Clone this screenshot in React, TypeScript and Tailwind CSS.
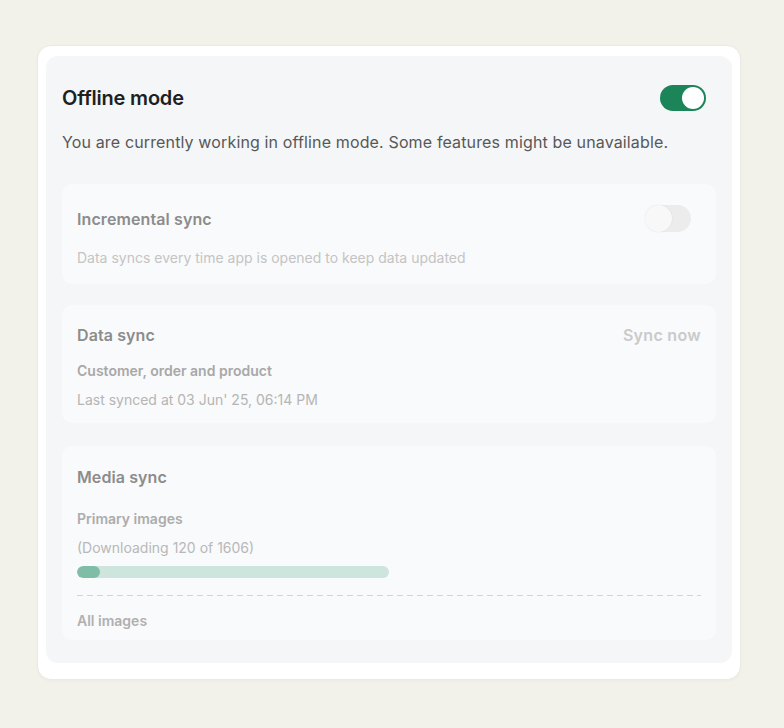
import React from "react";

function Toggle({ on }: { on: boolean }) {
  if (on) {
    return (
      <div className="w-[46px] h-[26px] rounded-full bg-[#1b8459] flex items-center justify-end px-[2px] shrink-0">
        <div className="w-[22px] h-[22px] rounded-full bg-white" />
      </div>
    );
  }
  return (
    <div className="w-[46px] h-[27px] rounded-full bg-[#ececec] flex items-center justify-start shrink-0">
      <div className="w-[27px] h-[27px] rounded-full bg-[#f8f8f8] shadow-[0_0_2px_rgba(0,0,0,0.08)]" />
    </div>
  );
}

export default function App() {
  const done = 120;
  const total = 1606;
  const pct = Math.max((done / total) * 100, 6.8);
  return (
    <div
      className="min-h-[728px] w-full bg-[#f2f2ea] pt-[45px] pl-[37px]"
      style={{ fontFamily: "Inter, 'Noto Sans', sans-serif" }}
    >
      <div className="w-[704px] h-[635px] bg-white rounded-[14px] border border-[#ebebe3] pt-[10px] px-[8px] pb-[16px] shadow-[0_1px_3px_rgba(0,0,0,0.03)]">
        <div className="h-full bg-[#f4f6f7] rounded-[12px] px-[16px] pt-[29px] pb-[20px] flex flex-col">
          <div className="flex items-center justify-between pr-[10px]">
            <div className="text-[20px] leading-[26px] font-semibold text-[#1f1f1f] tracking-[-0.2px]">
              Offline mode
            </div>
            <Toggle on={true} />
          </div>
          <div className="mt-[19px] text-[16px] leading-[24px] text-[#585858] tracking-[0.14px]">
            You are currently working in offline mode. Some features might be unavailable.
          </div>

          <div className="mt-[30px] bg-[#f9fafb] rounded-[10px] px-[15px] pt-[21px] pb-[16px]">
            <div className="flex items-center justify-between pr-[10px]">
              <div className="text-[16px] leading-[24px] font-semibold text-[#8c8c8c] tracking-[0.1px]">
                Incremental sync
              </div>
              <Toggle on={false} />
            </div>
            <div className="mt-[16px] text-[14px] leading-[20px] text-[#c4c4c4]">
              Data syncs every time app is opened to keep data updated
            </div>
          </div>

          <div className="mt-[21px] bg-[#f9fafb] rounded-[10px] px-[15px] pt-[18px] pb-[13px]">
            <div className="flex items-center justify-between">
              <div className="text-[16px] leading-[24px] font-semibold text-[#8c8c8c] tracking-[0.1px]">
                Data sync
              </div>
              <div className="text-[16px] leading-[24px] font-semibold text-[#cacaca] tracking-[0.3px]">
                Sync now
              </div>
            </div>
            <div className="mt-[14px] text-[14px] leading-[20px] font-semibold text-[#a8a8a8]">
              Customer, order and product
            </div>
            <div className="mt-[9px] text-[14px] leading-[20px] text-[#b5b5b5]">
              Last synced at 03 Jun' 25, 06:14 PM
            </div>
          </div>

          <div className="mt-[23px] bg-[#f9fafb] rounded-[10px] px-[15px] pt-[19px] pb-[9px]">
            <div className="text-[16px] leading-[24px] font-semibold text-[#8c8c8c] tracking-[0.1px]">
              Media sync
            </div>
            <div className="mt-[20px] text-[14px] leading-[20px] font-semibold text-[#acacac]">
              Primary images
            </div>
            <div className="mt-[9px] text-[14px] leading-[20px] text-[#b8b8b8]">
              (Downloading {done} of {total})
            </div>
            <div className="mt-[8px] w-[312px] h-[12px] rounded-full bg-[#cde5dc] overflow-hidden">
              <div
                className="h-full rounded-full bg-[#7fbda7]"
                style={{ width: `${pct}%` }}
              />
            </div>
            <div className="mt-[17px] h-[1px] bg-[linear-gradient(to_right,#d4d4d4_60%,transparent_0)] bg-[length:10px_1px] bg-repeat-x" />
            <div className="mt-[15px] text-[14px] leading-[20px] font-semibold text-[#b0b0b0]">
              All images
            </div>
          </div>
        </div>
      </div>
    </div>
  );
}
